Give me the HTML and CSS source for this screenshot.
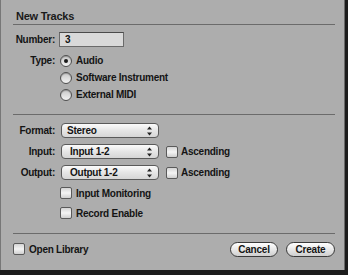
FILE: index.html
```html
<!DOCTYPE html>
<html>
<head>
    <title>New Tracks</title>
    <link rel="stylesheet" href="styles.css">
</head>
<body>
    <div class="dialog">
        <h2 class="title">New Tracks</h2>
        <div class="rule"></div>

        <div class="form top">
            <span class="lbl">Number:</span>
            <div class="cell"><input type="text" class="field" value="3"></div>

            <span class="lbl type-lbl">Type:</span>
            <div class="radios">
                <label class="opt"><span class="radio on"></span>Audio</label>
                <label class="opt"><span class="radio"></span>Software Instrument</label>
                <label class="opt"><span class="radio"></span>External MIDI</label>
            </div>
        </div>

        <div class="rule"></div>

        <div class="form bottom">
            <span class="lbl pop-row">Format:</span>
            <div class="cell pop-row">
                <div class="popup pad-s">Stereo<span class="arrows"><svg width="5" height="10" viewBox="0 0 5 10"><path d="M2.5 0.5 L5 3.5 H0 Z M2.5 9.5 L5 6.5 H0 Z" fill="#222"/></svg></span></div>
            </div>

            <span class="lbl pop-row">Input:</span>
            <div class="cell pop-row">
                <div class="popup">Input 1-2<span class="arrows"><svg width="5" height="10" viewBox="0 0 5 10"><path d="M2.5 0.5 L5 3.5 H0 Z M2.5 9.5 L5 6.5 H0 Z" fill="#222"/></svg></span></div>
                <label class="opt side"><span class="check"></span>Ascending</label>
            </div>

            <span class="lbl pop-row">Output:</span>
            <div class="cell pop-row">
                <div class="popup">Output 1-2<span class="arrows"><svg width="5" height="10" viewBox="0 0 5 10"><path d="M2.5 0.5 L5 3.5 H0 Z M2.5 9.5 L5 6.5 H0 Z" fill="#222"/></svg></span></div>
                <label class="opt side"><span class="check"></span>Ascending</label>
            </div>

            <span class="lbl chk-row"></span>
            <div class="cell chk-row">
                <label class="opt"><span class="check"></span>Input Monitoring</label>
            </div>

            <span class="lbl chk-row"></span>
            <div class="cell chk-row">
                <label class="opt"><span class="check"></span>Record Enable</label>
            </div>
        </div>

        <div class="rule"></div>

        <div class="footer">
            <label class="opt"><span class="check"></span>Open Library</label>
            <div class="buttons">
                <button class="btn">Cancel</button>
                <button class="btn wide">Create</button>
            </div>
        </div>
    </div>
</body>
</html>
```

FILE: styles.css
```css
body {
    margin: 0;
    background-color: #1c1c1c;
    font-family: "Liberation Sans", Arial, sans-serif;
    font-weight: bold;
    font-size: 10px;
    letter-spacing: -0.25px;
    color: #141414;
}

.dialog {
    width: 345px;
    height: 270px;
    box-sizing: border-box;
    padding: 9px 9px 0 12px;
    background-color: #adadad;
    border-left: 1px solid #777;
    border-right: 1px solid #6a6a6a;
}

.title {
    margin: 0 0 1px 3px;
    font-size: 11px;
    line-height: 14px;
    color: #1a1a1a;
}

.rule {
    height: 1px;
    background-color: #6b6b6b;
}

.form {
    display: grid;
    grid-template-columns: 42px 1fr;
    column-gap: 5px;
}

.form.top {
    padding-top: 7px;
    margin-bottom: 11px;
}

.form.bottom {
    padding-top: 5px;
    margin-bottom: 10px;
}

.lbl {
    display: flex;
    align-items: center;
    justify-content: flex-end;
    height: 15px;
}

.type-lbl {
    margin-top: 5px;
    height: 17px;
}

.cell {
    display: flex;
    align-items: center;
}

.field {
    width: 65px;
    height: 15px;
    box-sizing: border-box;
    margin: 0 0 0 -1px;
    padding: 0 0 0 5px;
    border: 1px solid #6a6a6a;
    border-top-color: #4a4a4a;
    background-color: #d9d9d9;
    font-family: inherit;
    font-weight: bold;
    font-size: 10px;
    color: #141414;
}

.radios {
    display: flex;
    flex-direction: column;
    margin-top: 5px;
}

.opt {
    display: flex;
    align-items: center;
    gap: 4px;
    height: 17px;
}

.radio {
    width: 12px;
    height: 12px;
    box-sizing: border-box;
    border: 1px solid #505050;
    border-radius: 50%;
    background: linear-gradient(#c8c8c8, #f2f2f2);
    box-shadow: inset 0 1px 1px rgba(0, 0, 0, 0.25);
    display: flex;
    align-items: center;
    justify-content: center;
}

.radio.on::after {
    content: "";
    width: 4px;
    height: 4px;
    border-radius: 50%;
    background-color: #1a1a1a;
}

.check {
    width: 12px;
    height: 12px;
    box-sizing: border-box;
    border: 1px solid #5a5a5a;
    border-radius: 2px;
    background: linear-gradient(#d4d4d4, #f4f4f4 50%, #cfcfcf);
}

.pop-row {
    height: 21px;
}

.chk-row {
    height: 20px;
}

.popup {
    position: relative;
    width: 98px;
    height: 15px;
    box-sizing: border-box;
    margin-left: 1px;
    padding-left: 8px;
    display: flex;
    align-items: center;
    border: 1px solid #5a5a5a;
    border-radius: 4px;
    background: linear-gradient(#fbfbfb, #e6e6e6 50%, #d6d6d6);
}

.popup.pad-s {
    padding-left: 5px;
}

.arrows {
    position: absolute;
    right: 6px;
    top: 2px;
    display: flex;
}

.side {
    margin-left: 7px;
    gap: 3px;
}

.footer {
    display: flex;
    justify-content: space-between;
    align-items: center;
    height: 16px;
    margin-top: 7px;
}

.buttons {
    display: flex;
    gap: 8px;
}

.btn {
    width: 48px;
    height: 15px;
    padding: 0;
    border: 1px solid #3a3a3a;
    border-radius: 8px;
    background: linear-gradient(#ffffff, #e8e8e8 50%, #cfcfcf);
    font-family: inherit;
    font-weight: bold;
    font-size: 10px;
    letter-spacing: -0.2px;
    color: #141414;
}

.btn.wide {
    width: 49px;
}
```
